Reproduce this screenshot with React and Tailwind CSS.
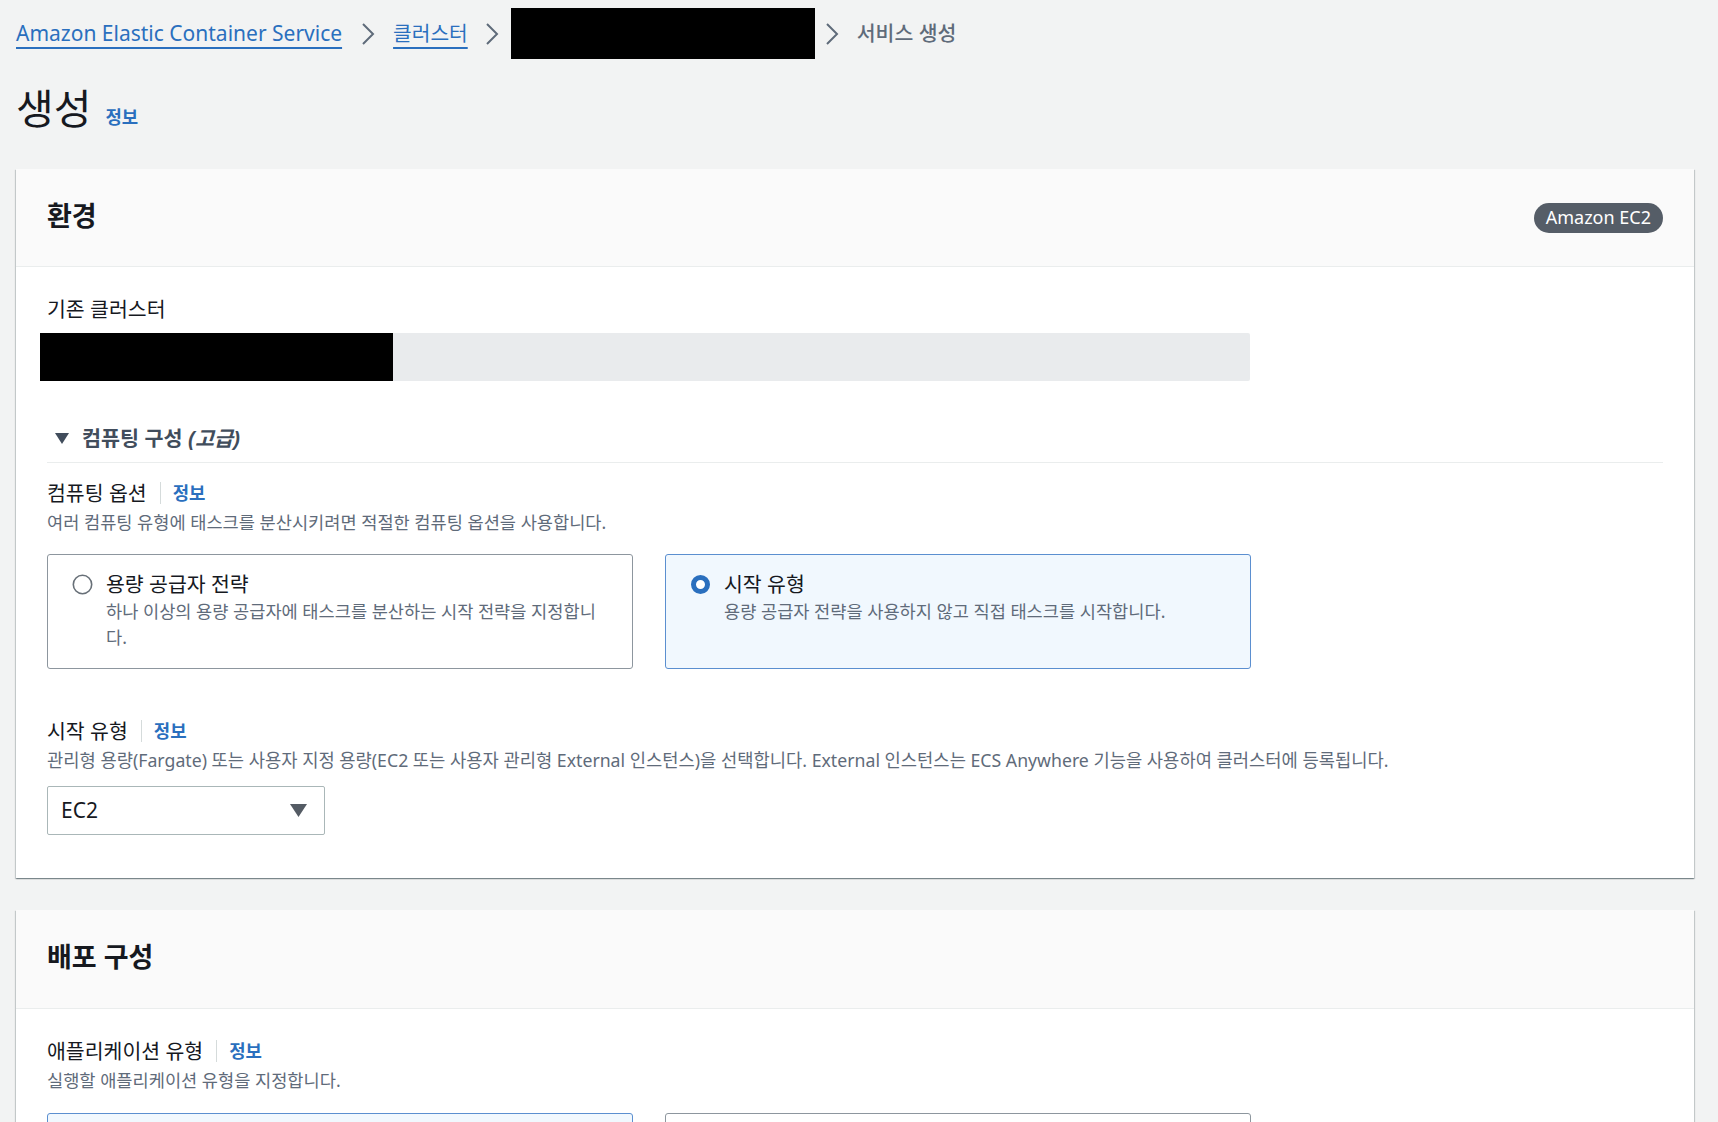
import React from "react";

const BLUE = "text-[#2a6fbe]";

function Chevron({ className }) {
  return (
    <svg className={className} width="14" height="22" viewBox="0 0 14 22" fill="none">
      <polyline points="2,1 12,11 2,21" stroke="#5f6b7a" strokeWidth="2" strokeLinejoin="miter" />
    </svg>
  );
}

function LabelInfo({ children, className = "" }) {
  return (
    <div className={"flex items-center h-[28px] " + className}>
      <span className="text-[20.5px] leading-[28px] text-[#16191f]">{children}</span>
      <span className="w-px h-[22px] bg-[#d5dbdb] ml-[13px] mr-[12px]" />
      <span className={"text-[17.8px] font-bold leading-[28px] " + BLUE}>정보</span>
    </div>
  );
}

function Radio({ checked }) {
  return checked ? (
    <svg width="21" height="21" viewBox="0 0 21 21" className="shrink-0">
      <circle cx="10.5" cy="10.5" r="7" fill="#fff" stroke="#2a6fbe" strokeWidth="5" />
    </svg>
  ) : (
    <svg width="21" height="21" viewBox="0 0 21 21" className="shrink-0">
      <circle cx="10.5" cy="10.5" r="9.2" fill="#fff" stroke="#687078" strokeWidth="1.6" />
    </svg>
  );
}

function RadioCard({ checked, title, desc }) {
  return (
    <div
      className={
        "rounded-[3px] border pl-[24px] pr-[24px] pt-[15px] pb-[18px] flex items-start gap-[13px] min-h-[115px] " +
        (checked ? "border-[#5b8fd0] bg-[#f1f8fe]" : "border-[#8d969e] bg-white")
      }
    >
      {title ? (
        <>
          <div className="h-[28px] flex items-center">
            <Radio checked={checked} />
          </div>
          <div className="flex-1">
            <div className="text-[20.5px] leading-[28px] text-[#16191f]">{title}</div>
            <div className="text-[17.6px] leading-[26px] text-[#5f6b7a]">{desc}</div>
          </div>
        </>
      ) : null}
    </div>
  );
}

const cardShadow =
  "shadow-[0_1px_1px_0_rgba(0,28,36,0.3),1px_1px_1px_0_rgba(0,28,36,0.15),-1px_1px_1px_0_rgba(0,28,36,0.15)]";

export default function App() {
  return (
    <div className="w-[1718px] h-[1122px] overflow-hidden bg-[#f2f3f3] pl-[16px] pr-[24px] font-['Noto_Sans','Noto_Sans_CJK_KR',sans-serif] text-[#16191f]">
      {/* Breadcrumb */}
      <div className="mt-[8px] h-[51px] flex items-center">
        <a className={"text-[21px] underline decoration-[1.5px] underline-offset-[6px] " + BLUE}>
          Amazon Elastic Container Service
        </a>
        <Chevron className="ml-[19px] mr-[18px]" />
        <a className={"text-[20.3px] underline decoration-[1.5px] underline-offset-[6px] " + BLUE}>클러스터</a>
        <Chevron className="ml-[17px] mr-[12px]" />
        <div className="w-[304px] h-[51px] bg-black" />
        <Chevron className="ml-[10px] mr-[18px]" />
        <span className="text-[20.5px] font-medium text-[#5f6b7a]">서비스 생성</span>
      </div>

      {/* Title */}
      <div className="mt-[26px] flex items-baseline gap-[14px]">
        <h1 className="text-[41px] leading-[46px] font-normal text-[#16191f]">생성</h1>
        <span className={"text-[17.8px] font-bold " + BLUE}>정보</span>
      </div>

      {/* Card 1 */}
      <div className={"mt-[38px] bg-white " + cardShadow}>
        <div className="h-[98px] bg-[#fafafa] border-b border-[#eaeded] px-[31px] flex items-center justify-between">
          <h2 className="text-[27px] font-bold leading-[34px] -mt-[4px]">환경</h2>
          <span className="h-[30px] px-[12px] rounded-full bg-[#555d67] text-white text-[18px] flex items-center">
            Amazon EC2
          </span>
        </div>
        <div className="px-[31px] pt-[28px] pb-[43px]">
          <div className="text-[20.5px] leading-[28px]">기존 클러스터</div>
          <div className="mt-[10px] w-[1203px] h-[48px] bg-[#e9ebed] rounded-[2px] flex">
            <div className="-ml-[7px] w-[353px] h-[48px] bg-black" />
          </div>

          <div className="mt-[43px] h-[28px] flex items-center pl-[8px] gap-[13px]">
            <svg width="14" height="11" viewBox="0 0 14 11">
              <polygon points="0,0 14,0 7,11" fill="#414d5c" />
            </svg>
            <span className="text-[20.7px] font-bold text-[#414d5c] leading-[28px]">
              컴퓨팅 구성 <i>(고급)</i>
            </span>
          </div>
          <div className="mt-[10px] border-t border-[#eaeded]" />

          <LabelInfo className="mt-[16px]">컴퓨팅 옵션</LabelInfo>
          <div className="mt-[2px] text-[17.6px] leading-[26px] text-[#5f6b7a]">
            여러 컴퓨팅 유형에 태스크를 분산시키려면 적절한 컴퓨팅 옵션을 사용합니다.
          </div>
          <div className="mt-[19px] grid grid-cols-[586px_586px] gap-[32px]">
            <RadioCard
              checked={false}
              title="용량 공급자 전략"
              desc="하나 이상의 용량 공급자에 태스크를 분산하는 시작 전략을 지정합니다."
            />
            <RadioCard
              checked={true}
              title="시작 유형"
              desc="용량 공급자 전략을 사용하지 않고 직접 태스크를 시작합니다."
            />
          </div>

          <LabelInfo className="mt-[48px]">시작 유형</LabelInfo>
          <div className="mt-[2px] text-[17.7px] leading-[26px] text-[#5f6b7a]">
            관리형 용량(Fargate) 또는 사용자 지정 용량(EC2 또는 사용자 관리형 External 인스턴스)을 선택합니다. External 인스턴스는 ECS Anywhere 기능을 사용하여 클러스터에 등록됩니다.
          </div>
          <div className="mt-[13px] w-[278px] h-[49px] border border-[#aab7b8] rounded-[2px] flex items-center justify-between pl-[13px] pr-[17px] bg-white">
            <span className="text-[21px]">EC2</span>
            <svg width="17" height="13" viewBox="0 0 17 13">
              <polygon points="0,0 17,0 8.5,13" fill="#545b64" />
            </svg>
          </div>
        </div>
      </div>

      {/* Card 2 */}
      <div className={"mt-[32px] bg-white " + cardShadow}>
        <div className="h-[99px] bg-[#fafafa] border-b border-[#eaeded] px-[31px] flex items-center">
          <h2 className="text-[27px] font-bold leading-[34px] -mt-[4px]">배포 구성</h2>
        </div>
        <div className="px-[31px] pt-[28px] pb-[43px]">
          <LabelInfo>애플리케이션 유형</LabelInfo>
          <div className="mt-[2px] text-[17.6px] leading-[26px] text-[#5f6b7a]">
            실행할 애플리케이션 유형을 지정합니다.
          </div>
          <div className="mt-[20px] grid grid-cols-[586px_586px] gap-[32px]">
            <RadioCard checked={true} />
            <RadioCard checked={false} />
          </div>
        </div>
      </div>
    </div>
  );
}
